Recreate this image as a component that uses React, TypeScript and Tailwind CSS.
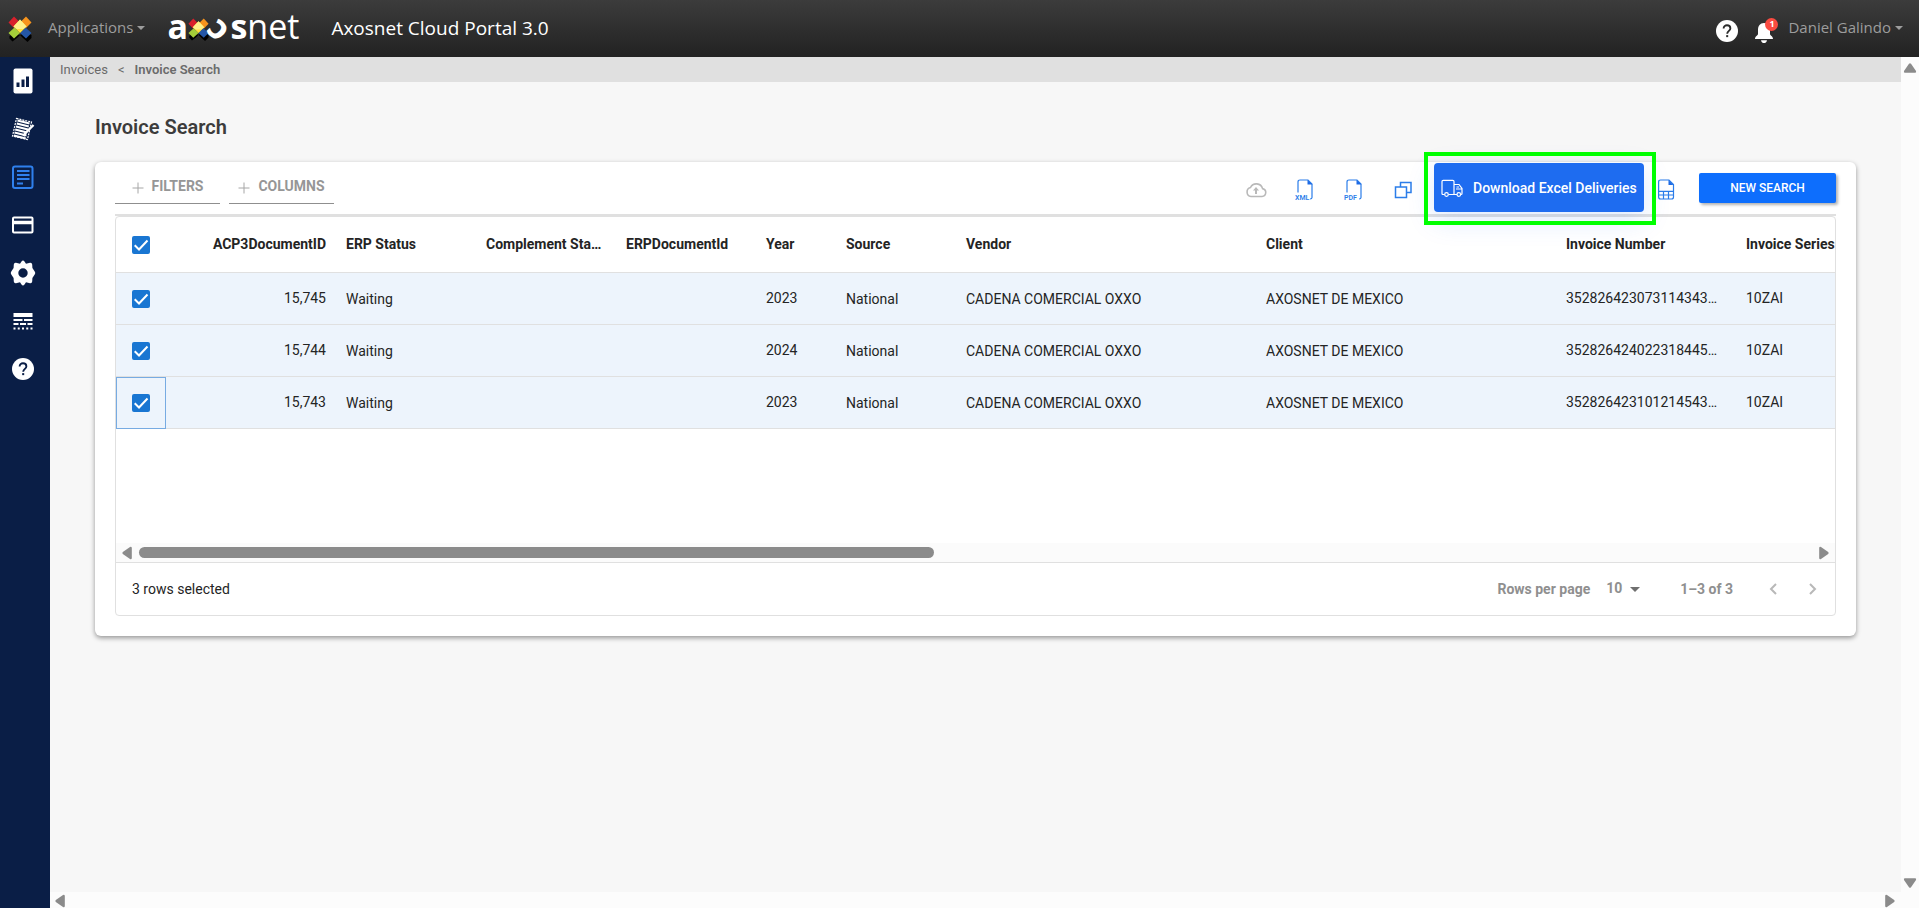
import { useState } from 'react';
import type { ReactNode } from 'react';
import clsx from 'clsx';

type Column = {
  key: string;
  label: string;
  width: string;
  align?: 'right';
  compact?: boolean;
};

const COLUMNS: Column[] = [
  { key: 'id', label: 'ACP3DocumentID', width: 'w-[170px]', align: 'right', compact: true },
  { key: 'erpStatus', label: 'ERP Status', width: 'w-[140px]' },
  { key: 'complement', label: 'Complement Status', width: 'w-[140px]' },
  { key: 'erpId', label: 'ERPDocumentId', width: 'w-[140px]' },
  { key: 'year', label: 'Year', width: 'w-[80px]', compact: true },
  { key: 'source', label: 'Source', width: 'w-[120px]' },
  { key: 'vendor', label: 'Vendor', width: 'w-[300px]' },
  { key: 'client', label: 'Client', width: 'w-[300px]' },
  { key: 'number', label: 'Invoice Number', width: 'w-[180px]', compact: true },
  { key: 'series', label: 'Invoice Series', width: 'w-[180px]', compact: true },
];

const ROWS: Record<string, string>[] = [
  { id: '15,745', erpStatus: 'Waiting', year: '2023', source: 'National', vendor: 'CADENA COMERCIAL OXXO', client: 'AXOSNET DE MEXICO', number: '352826423073114343012', series: '10ZAI' },
  { id: '15,744', erpStatus: 'Waiting', year: '2024', source: 'National', vendor: 'CADENA COMERCIAL OXXO', client: 'AXOSNET DE MEXICO', number: '352826424022318445013', series: '10ZAI' },
  { id: '15,743', erpStatus: 'Waiting', year: '2023', source: 'National', vendor: 'CADENA COMERCIAL OXXO', client: 'AXOSNET DE MEXICO', number: '352826423101214543014', series: '10ZAI' },
];

function LogoMark({ className }: { className?: string }) {
  return (
    <svg viewBox="0 0 24 26" className={className} aria-hidden="true">
      <path d="M1.500 20l5-3 5.500 2 6-3 5.500 3v3l-4 4-4.500-4-3-3-3 3-4.500 3.500-3-3z" fill="#000" />
      <path d="M6 0.500l6 6-6 5.500-5.500-5.500z" fill="#d8202c" />
      <path d="M18 0.500l5.500 6-5.500 5.500-6-5.500z" fill="#f7941d" />
      <path d="M6.500 11.500l5.500 5.500-6 5.500-5.500-5.500z" fill="#a4cd39" />
      <path d="M17.500 11.500l6 5.500-5.500 5.500-6-5.500z" fill="#2456a6" />
      <path d="M12 3.500l6.500 7-6.500 6.500-6.500-6.500z" fill="#ffe03c" />
      <path d="M12 3.500l6.500 7-3 2.500H8.500l-3-2.500z" fill="#fff08a" />
    </svg>
  );
}

function Caret() {
  return (
    <svg viewBox="0 0 8 4" className="ml-1 h-1 w-2" fill="currentColor" aria-hidden="true">
      <path d="M0 0h8L4 4z" />
    </svg>
  );
}

function HelpIcon({ className }: { className?: string }) {
  return (
    <svg viewBox="0 0 24 24" className={className} aria-hidden="true">
      <circle cx="12" cy="12" r="12" fill="#fff" />
      <path d="M8.300 9.300c0-2 1.600-3.600 3.700-3.600s3.700 1.500 3.700 3.500c0 2.400-3.500 2.900-3.500 5.700" fill="none" stroke="currentColor" strokeWidth="2" />
      <rect x="11.100" y="16.500" width="2.200" height="2.200" fill="currentColor" />
    </svg>
  );
}

function ScrollArrow({ dir }: { dir: 'up' | 'down' | 'left' | 'right' }) {
  return (
    <svg
      viewBox="0 0 14 14"
      className={clsx('h-3.5 w-3.5', dir === 'right' && 'rotate-90', dir === 'down' && 'rotate-180', dir === 'left' && '-rotate-90')}
      aria-hidden="true"
    >
      <path d="M6 2.800q1-1 2 0L13 10q.6 1.500-.8 1.800H1.800Q.4 11.500 1 10z" fill="#8b8b8b" />
    </svg>
  );
}

const NAV: { name: string; icon: ReactNode }[] = [
  {
    name: 'Dashboard',
    icon: (
      <svg viewBox="0 0 24 26" className="h-[26px] w-6">
        <rect x="2.500" y="0.500" width="19" height="25" rx="2" fill="#fff" />
        <path d="M7 14.500v4.500M12 11.500v7.500M16.500 8.500v10.500" stroke="#0a1e46" strokeWidth="3" />
      </svg>
    ),
  },
  {
    name: 'Orders',
    icon: (
      <svg viewBox="0 0 24 24" className="h-6 w-6" fill="none" stroke="#fff">
        <path d="M5.500 1.500l15 3.500-4 17.500-15-3.500z" strokeWidth="1.200" strokeDasharray="2 1" />
        <path d="M6.500 3.500l12 3M5.800 6.500l12 3M5 9.500l12 3M4.200 12.500l12 3M3.500 15.500l12 3M2.800 18.500l12 3" strokeWidth="1.900" />
        <path d="M22.500 8l-8 8-2 3" strokeWidth="2.400" />
      </svg>
    ),
  },
  {
    name: 'Invoices',
    icon: (
      <svg viewBox="0 0 24 24" className="h-6 w-6" fill="none" stroke="#2f80ed">
        <rect x="2" y="1.500" width="19.500" height="21.500" rx="2" strokeWidth="2" />
        <path d="M6 6h12.500M6 10h12.500M6 14h12.500M6 18.500h6" strokeWidth="1.800" />
      </svg>
    ),
  },
  {
    name: 'Payments',
    icon: (
      <svg viewBox="0 0 24 24" className="h-6 w-6">
        <rect x="2" y="4.500" width="19.500" height="15" rx="1" fill="none" stroke="#fff" strokeWidth="2" />
        <path d="M2 9.500h20" stroke="#fff" strokeWidth="3.500" />
      </svg>
    ),
  },
  {
    name: 'Settings',
    icon: (
      <svg viewBox="0 0 26 26" className="h-[26px] w-[26px]">
        <path
          fillRule="evenodd"
          fill="#fff"
          d="M11.500 1.500q1.500-2 3 0l1.500 2.300 4-1q2-.3 2.200 1.700l.2 3.500 2.300 3.500q1 1.500 0 3L22.400 18l-.2 3.500q-.2 2-2.200 1.700l-4-1-1.500 2.300q-1.500 2-3 0L10 22.200l-4 1q-2 .3-2.200-1.700L3.600 18l-2.300-3.500q-1-1.500 0-3L3.600 8l.2-3.500Q4 2.500 6 2.800l4 1zM13 8.300a4.700 4.700 0 1 0 0 9.400 4.700 4.700 0 0 0 0-9.400z"
        />
      </svg>
    ),
  },
  {
    name: 'Catalogs',
    icon: (
      <svg viewBox="0 0 24 24" className="h-6 w-6" stroke="#fff">
        <path d="M2.500 6h19" strokeWidth="4" />
        <path d="M2.500 11h9M13 11h8.500M2.500 15h5M9 15h6M16.500 15h5" strokeWidth="2" />
        <path d="M2.500 19.500h19" strokeWidth="2" strokeDasharray="2 2.250" />
      </svg>
    ),
  },
  { name: 'Help', icon: <HelpIcon className="h-[22px] w-[22px] text-[#0a1e46]" /> },
];

function Checkbox({ label, checked, onChange }: { label: string; checked: boolean; onChange: () => void }) {
  return (
    <label className="grid h-full place-items-center">
      <input
        type="checkbox"
        aria-label={label}
        checked={checked}
        onChange={onChange}
        className="col-start-1 row-start-1 h-[18px] w-[18px] appearance-none rounded-xs border-2 border-gray-500 checked:border-[#1976d2] checked:bg-[#1976d2]"
      />
      {checked && (
        <svg viewBox="0 0 18 18" className="pointer-events-none col-start-1 row-start-1 h-[18px] w-[18px]" fill="none" stroke="#fff" strokeWidth="2" aria-hidden="true">
          <path d="M2.700 9.300L7 13.500l8.500-9" />
        </svg>
      )}
    </label>
  );
}

function FileIcon({ kind }: { kind: 'XML' | 'PDF' }) {
  return (
    <svg viewBox="0 0 20 22" className="h-[22px] w-5" aria-hidden="true">
      <path d="M3 13.500V3q0-2 2-2h8l4 4v13.500q0 1.500-2 1.500" fill="none" stroke="#2b7de9" strokeWidth="1.200" />
      <path d="M12.500 1v4.500h5z" fill="#1d6ae5" />
      <text x="0" y="20.500" fontSize="7" fontWeight="600" fontFamily="Roboto, sans-serif" fill="#2b7de9">{kind}</text>
    </svg>
  );
}

function IconButton({ label, children }: { label: string; children: ReactNode }) {
  return (
    <button type="button" aria-label={label} className="flex h-12 w-[49px] items-center justify-center pt-2">
      {children}
    </button>
  );
}

function PanelButton({ children }: { children: ReactNode }) {
  return (
    <button type="button" className="flex h-[42px] w-[105px] items-center justify-center border-b border-[#8f8f8f] pt-[7px] text-sm font-bold text-[#969696]">
      <svg viewBox="0 0 12 12" className="mt-1 mr-2 h-3 w-3" stroke="#a6a6a6" aria-hidden="true">
        <path d="M6 0.500v11M0.500 6h11" />
      </svg>
      {children}
    </button>
  );
}

export default function App() {
  const [selected, setSelected] = useState<string[]>(ROWS.map((r) => r.id));

  function toggle(id: string) {
    setSelected((prev) => (prev.includes(id) ? prev.filter((x) => x !== id) : [...prev, id]));
  }

  const allSelected = selected.length === ROWS.length;

  return (
    <div className="flex h-screen flex-col overflow-hidden font-['Roboto',sans-serif]">
      <header className="flex h-[57px] shrink-0 items-center bg-linear-to-b from-[#3c3c3c] to-[#222222] pr-4 pl-2 font-['Open_Sans',sans-serif]">
        <LogoMark className="h-[26px] w-6" />
        <button type="button" className="ml-4 flex items-center pb-0.5 text-[15px] text-[#9d9d9d]">
          Applications
          <Caret />
        </button>
        <a href="#" aria-label="axosnet" className="ml-[22px] flex h-10 items-center pb-1.5 text-[34px] leading-10 text-white">
          <span className="font-bold">a</span>
          <LogoMark className="mt-2 mr-1 h-[23px] w-[21px]" />
          <span className="inline-block rotate-45 pt-1 font-['Noto_Sans',sans-serif] leading-5 font-bold">ɔ</span>
          <span className="font-bold">s</span>
          <span>net</span>
        </a>
        <h1 className="ml-8 text-[19px] text-white">Axosnet Cloud Portal 3.0</h1>

        <div className="ml-auto flex items-center">
          <button type="button" aria-label="Help" className="mt-1">
            <HelpIcon className="h-[22px] w-[22px] text-[#2b2b2b]" />
          </button>
          <button type="button" aria-label="Notifications" className="relative mt-2 ml-4">
            <svg viewBox="0 0 20 22" className="h-[22px] w-5" fill="#fff">
              <path d="M10 1c-4 0-6 3-6 6.500V12c0 1.500-3 2-3 5h18c0-3-3-3.500-3-5V7.500C16 4 14 1 10 1z" />
              <path d="M7 18.200h6q-.5 2.800-3 2.800t-3-2.800z" />
            </svg>
            <span className="absolute -top-1 -right-1 flex h-[13px] w-[13px] items-center justify-center rounded-full bg-[#fb4b41] text-[9px] leading-3 font-bold text-white">1</span>
          </button>
          <button type="button" className="ml-[14px] flex items-center pb-0.5 text-[15px] text-[#9d9d9d]">
            Daniel Galindo
            <Caret />
          </button>
        </div>
      </header>

      <div className="flex min-h-0 flex-1">
        <nav className="flex w-[50px] shrink-0 flex-col bg-[#0a1e46]">
          {NAV.map((item) => (
            <a key={item.name} href="#" aria-label={item.name} className="flex h-12 w-12 items-center justify-center pr-0.5 pb-px">
              {item.icon}
            </a>
          ))}
        </nav>

        <div className="flex min-w-0 flex-1 flex-col">
          <div className="flex min-h-0 flex-1">
            <main className="min-w-0 flex-1 bg-[#f7f7f7]">
              <div className="flex h-[25px] items-center gap-[10px] bg-[#e0e0e0] px-[10px] text-[13px] text-[#6b6b6b]">
                <a href="#">Invoices</a>
                <span>&lt;</span>
                <span className="font-semibold">Invoice Search</span>
              </div>

              <div className="px-[45px] pt-[30px]">
                <h2 className="text-xl leading-[30px] font-semibold text-[#3c3c3c]">Invoice Search</h2>

                <section className="mt-5 rounded-md bg-white px-5 pb-5 shadow-[0_2px_5px_rgba(0,0,0,0.4)]">
                  <div className="flex h-[54px] items-start border-b-2 border-[#e0e0e0]">
                    <div className="flex gap-[9px]">
                      <PanelButton>FILTERS</PanelButton>
                      <PanelButton>COLUMNS</PanelButton>
                    </div>

                    <div className="ml-auto flex items-start">
                      <IconButton label="Upload">
                        <svg viewBox="0 0 22 16" className="h-4 w-[22px]" fill="none" stroke="#b9b9b9" strokeWidth="1.600">
                          <path d="M6 14.500h11a4 4 0 0 0 .6-7.900A6.500 6.500 0 0 0 5.500 5.500 4.600 4.600 0 0 0 6 14.500z" />
                          <path d="M11 12V7" strokeWidth="2" />
                          <path d="M8 8.500h6l-3-3.500z" fill="#b9b9b9" stroke="none" />
                        </svg>
                      </IconButton>
                      <IconButton label="Download XML"><FileIcon kind="XML" /></IconButton>
                      <IconButton label="Download PDF"><FileIcon kind="PDF" /></IconButton>
                      <IconButton label="Copy">
                        <svg viewBox="0 0 18 18" className="h-[18px] w-[18px]" fill="none" stroke="#2b7de9" strokeWidth="1.500">
                          <path d="M6.500 6V1.500h10.500v10H13" />
                          <path d="M1.500 6h11v10.500h-11z" />
                        </svg>
                      </IconButton>

                      <div className="relative mt-px mr-[13px] ml-[7px]">
                        <button
                          type="button"
                          className="flex h-[49px] w-[210px] items-center gap-[10px] rounded-sm bg-[#1e6cf0] pl-[7px] text-sm font-medium whitespace-nowrap text-white shadow-[0_8px_28px_rgba(30,108,240,0.15)]"
                        >
                          <svg viewBox="0 0 22 18" className="h-[18px] w-[22px] shrink-0" fill="none" stroke="#fff" strokeWidth="1.200" aria-hidden="true">
                            <path d="M3.500 15.500H2q-1 0-1-1V2.500q0-1.200 1.200-1.200h9.600q1.200 0 1.200 1.200v13H7.500M13 5.500h5l3 4v5q0 1-1 1h-.5M16 15.500h-3M15 10h6M15.500 8h2.500" />
                            <circle cx="5.500" cy="15.500" r="1.800" />
                            <circle cx="17.800" cy="15.500" r="1.800" />
                          </svg>
                          Download Excel Deliveries
                        </button>
                        <div className="pointer-events-none absolute -top-[11px] -right-3 -bottom-[13px] -left-[10px] z-10 border-4 border-[#00ff00]" />
                      </div>

                      <button type="button" aria-label="Download Excel" className="flex h-12 items-center pt-2">
                        <svg viewBox="0 0 18 22" className="h-[22px] w-[18px]" fill="none" stroke="#2b7de9" strokeWidth="1.200">
                          <path d="M1.600 3q0-2 2-2h8.400l4.500 4.500V18q0 2-2 2H3.600q-2 0-2-2z" />
                          <path d="M1.600 12.300h15M1.600 16h15M6.500 12.300V20M11.500 12.300V20" />
                          <path d="M11.500 1v5h5z" fill="#1d6ae5" stroke="none" />
                        </svg>
                      </button>
                      <button type="button" className="mt-[11px] ml-6 h-[30px] w-[137px] rounded-xs bg-[#0d6efd] text-xs font-medium text-white shadow-[2px_2px_3px_rgba(0,0,0,0.3)]">
                        NEW SEARCH
                      </button>
                    </div>
                  </div>

                  <div className="flex h-[400px] flex-col rounded border border-[#e0e0e0] text-sm text-[#242424]">
                    <div className="flex-1 overflow-hidden">
                      <table className="w-[1750px] table-fixed border-separate border-spacing-0 text-left whitespace-nowrap">
                        <thead>
                          <tr className="h-14">
                            <th className="h-14 w-[50px] border-b border-[#e0e0e0] p-0">
                              <Checkbox label="Select all rows" checked={allSelected} onChange={() => setSelected(allSelected ? [] : ROWS.map((r) => r.id))} />
                            </th>
                            {COLUMNS.map((col) => (
                              <th
                                key={col.key}
                                className={clsx('truncate border-b border-[#e0e0e0] px-[10px] pt-0 pb-0.5 font-bold', col.width, col.align === 'right' && 'text-right')}
                              >
                                {col.label}
                              </th>
                            ))}
                          </tr>
                        </thead>
                        <tbody>
                          {ROWS.map((row, i) => (
                            <tr key={row.id} className={clsx('h-[52px]', selected.includes(row.id) && 'bg-[#edf4fc]')}>
                              <td className={clsx('h-[52px] border-b border-[#e0e0e0] p-0', i === ROWS.length - 1 && 'outline-1 -outline-offset-1 outline-[#77abe2]')}>
                                <Checkbox label={`Select row ${row.id}`} checked={selected.includes(row.id)} onChange={() => toggle(row.id)} />
                              </td>
                              {COLUMNS.map((col) => (
                                <td
                                  key={col.key}
                                  className={clsx(
                                    'truncate border-b border-[#e0e0e0] pt-0 pl-[10px]',
                                    col.compact ? 'pb-0.5' : 'pb-0',
                                    col.align === 'right' ? 'pr-[10px] text-right' : 'pr-4'
                                  )}
                                >
                                  {row[col.key]}
                                </td>
                              ))}
                            </tr>
                          ))}
                        </tbody>
                      </table>
                    </div>

                    <div className="flex h-[19px] shrink-0 items-center gap-[5px] bg-[#fbfbfb] px-1">
                      <ScrollArrow dir="left" />
                      <div className="flex-1">
                        <div className="h-[11px] w-[47.5%] rounded-full bg-[#8b8b8b]" />
                      </div>
                      <ScrollArrow dir="right" />
                    </div>

                    <footer className="flex h-[53px] shrink-0 items-center border-t border-[#e0e0e0] pr-[10px] pl-4">
                      <span>{selected.length} rows selected</span>
                      <div className="ml-auto flex items-center font-bold text-[#8f8f8f]">
                        <label htmlFor="page-size">Rows per page</label>
                        <div className="relative ml-4 flex items-center">
                          <select id="page-size" defaultValue="10" className="w-9 appearance-none pb-0.5">
                            <option>10</option>
                            <option>25</option>
                          </select>
                          <svg viewBox="0 0 10 5" className="pointer-events-none absolute right-0.5 h-[5px] w-[10px]" fill="#6f6f6f" aria-hidden="true">
                            <path d="M0 0h10L5 5z" />
                          </svg>
                        </div>
                        <span className="ml-[38px]">1–3 of 3</span>
                        <div className="ml-7 flex gap-4">
                          <button type="button" aria-label="Previous page" disabled className="flex h-6 w-6 items-center justify-center">
                            <svg viewBox="0 0 8 12" className="h-3 w-2" fill="none" stroke="#b8b8b8" strokeWidth="2"><path d="M7 1L2 6l5 5" /></svg>
                          </button>
                          <button type="button" aria-label="Next page" disabled className="flex h-6 w-6 items-center justify-center">
                            <svg viewBox="0 0 8 12" className="h-3 w-2" fill="none" stroke="#b8b8b8" strokeWidth="2"><path d="M1 1l5 5-5 5" /></svg>
                          </button>
                        </div>
                      </div>
                    </footer>
                  </div>
                </section>
              </div>
            </main>

            <div className="flex w-[18px] shrink-0 flex-col items-center justify-between bg-[#fcfcfc] pt-1 pb-0.5">
              <ScrollArrow dir="up" />
              <ScrollArrow dir="down" />
            </div>
          </div>
          <div className="flex h-4 shrink-0 items-end justify-between bg-[#fcfcfc] pr-[22px] pl-[3px]">
            <ScrollArrow dir="left" />
            <ScrollArrow dir="right" />
          </div>
        </div>
      </div>
    </div>
  );
}
